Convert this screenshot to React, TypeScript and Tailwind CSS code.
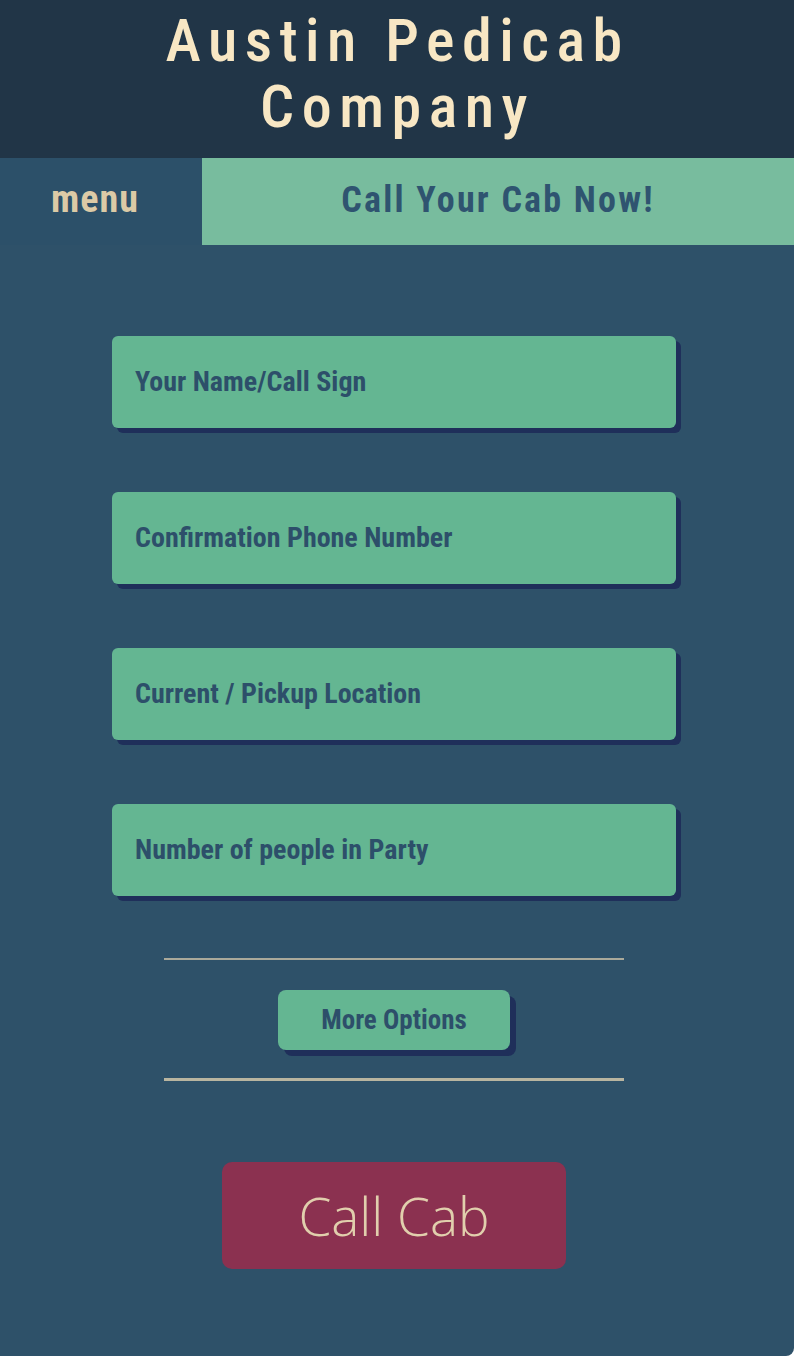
const fields = [
  'Your Name/Call Sign',
  'Confirmation Phone Number',
  'Current / Pickup Location',
  'Number of people in Party',
]

export default function App() {
  return (
    <div className="w-[794px] min-h-[1356px] bg-[#2e5169] rounded-br-lg overflow-hidden flex flex-col font-['Roboto_Condensed','DejaVu_Sans_Condensed',sans-serif]">
      <header className="h-[158px] bg-[#213547] flex items-center justify-center pr-[6px]">
        <h1 className="text-center text-[60px] leading-[66px] font-medium tracking-[7.5px] text-[#f8e7c4] pl-[7px] pb-[10px]">
          Austin Pedicab
          <br />
          Company
        </h1>
      </header>
      <div className="flex h-[87px]">
        <button className="w-[202px] bg-[#2c5069] text-[#dccaa6] text-[38px] font-bold tracking-[1px] pb-1 pr-[12px]">
          menu
        </button>
        <div className="flex-1 bg-[#78bc9e] flex items-center justify-center text-[#2f5470] text-[36px] font-bold tracking-[2.2px] pb-1">
          Call Your Cab Now!
        </div>
      </div>
      <main className="flex flex-col items-center pt-[91px] pr-[6px]">
        <div className="flex flex-col gap-[64px]">
          {fields.map((f) => (
            <div
              key={f}
              className="w-[564px] h-[92px] rounded-md bg-[#64b692] shadow-[5px_5px_0_#1f2f5a] flex items-center px-[23px] text-[#2d4f6a] text-[28px] font-bold"
            >
              {f}
            </div>
          ))}
        </div>
        <div className="w-[460px] mt-[62px] flex flex-col items-center">
          <div className="w-full h-[2px] bg-[#aaa99a]" />
          <button className="mt-[30px] w-[232px] h-[60px] rounded-lg bg-[#64b692] shadow-[6px_6px_0_#1f2f5a] text-[#2d4f6a] text-[27px] font-bold">
            More Options
          </button>
          <div className="mt-[28px] w-full h-[3px] bg-[#b9b5a0]" />
        </div>
        <button className="mt-[81px] w-[344px] h-[107px] rounded-[10px] bg-[#8b3150] text-[#e1cfad] text-[53px] font-light font-['Open_Sans',sans-serif]">
          Call Cab
        </button>
      </main>
    </div>
  )
}
